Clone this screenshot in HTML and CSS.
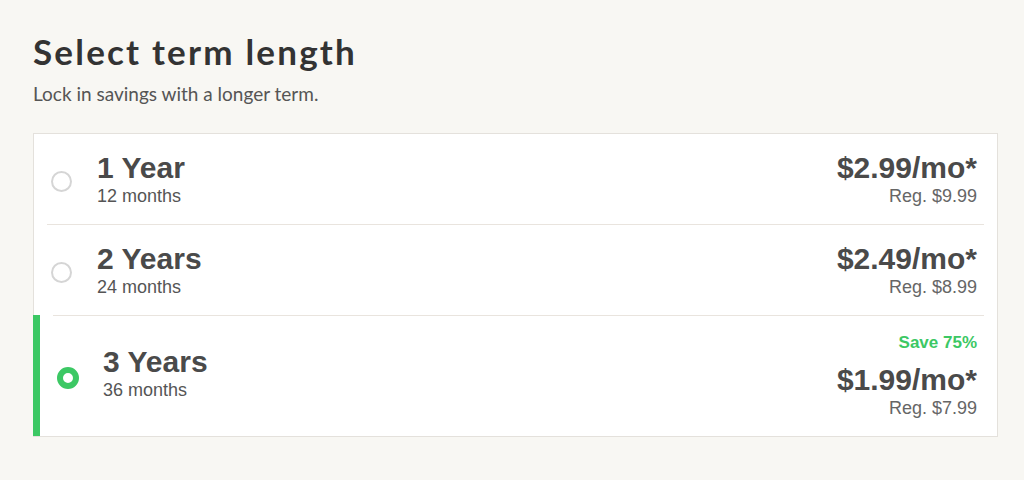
FILE: index.html
```html
<!DOCTYPE html>
<html lang="en">
<head>
<meta charset="utf-8">
<title>Select term length</title>
<link rel="stylesheet" href="styles.css">
</head>
<body>
<main class="page">
  <h1 class="heading">Select term length</h1>
  <p class="intro">Lock in savings with a longer term.</p>
  <ul class="terms">
    <li class="term">
      <div class="term-inner">
        <span class="radio"></span>
        <div class="term-label">
          <div class="term-name">1 Year</div>
          <div class="term-months">12 months</div>
        </div>
        <div class="term-price">
          <div class="price">$2.99/mo*</div>
          <div class="reg">Reg. $9.99</div>
        </div>
      </div>
    </li>
    <li class="term">
      <div class="term-inner divided">
        <span class="radio"></span>
        <div class="term-label">
          <div class="term-name">2 Years</div>
          <div class="term-months">24 months</div>
        </div>
        <div class="term-price">
          <div class="price">$2.49/mo*</div>
          <div class="reg">Reg. $8.99</div>
        </div>
      </div>
    </li>
    <li class="term selected">
      <div class="term-inner divided">
        <span class="radio"></span>
        <div class="term-label">
          <div class="term-name">3 Years</div>
          <div class="term-months">36 months</div>
        </div>
        <div class="term-price">
          <div class="save">Save 75%</div>
          <div class="price">$1.99/mo*</div>
          <div class="reg">Reg. $7.99</div>
        </div>
      </div>
    </li>
  </ul>
</main>
</body>
</html>
```
FILE: styles.css
```css
html, body {
  margin: 0;
  padding: 0;
  background: #f8f7f3;
}

.page {
  padding: 31px 26px 0 33px;
  font-family: "Liberation Sans", Arial, sans-serif;
  color: #4a4a4a;
}

.heading {
  margin: 0;
  font-family: Lato, "Liberation Sans", sans-serif;
  font-weight: 700;
  font-size: 35px;
  line-height: 40px;
  letter-spacing: 2.2px;
  color: #333333;
}

.intro {
  margin: 11px 0 27px;
  font-family: Lato, "Liberation Sans", sans-serif;
  font-size: 19px;
  line-height: 24px;
  color: #555555;
}

.terms {
  list-style: none;
  margin: 0;
  padding: 0;
  background: #ffffff;
  border: 1px solid #e4e1dc;
}

.term {
  display: flex;
}

.term.selected {
  margin-left: -1px;
  border-left: 7px solid #3cc864;
}

.term-inner {
  flex: 1;
  margin: 0 13px;
  padding: 17px 7px 17px 4px;
  display: flex;
  align-items: center;
}

.term-inner.divided {
  border-top: 1px solid #e9e4de;
}

.radio {
  flex: none;
  box-sizing: border-box;
  width: 21px;
  height: 21px;
  margin-top: 4px;
  border: 2px solid #d5d5d5;
  border-radius: 50%;
  background: #ffffff;
}

.selected .radio {
  width: 22px;
  height: 22px;
  border: 6px solid #3cc864;
}

.term-label {
  flex: 1;
  margin-left: 25px;
}

.selected .term-label {
  margin-left: 24px;
  margin-bottom: 7px;
}

.term-name {
  font-weight: 700;
  font-size: 30px;
  line-height: 34px;
}

.term-months {
  font-size: 18px;
  line-height: 22px;
  color: #555555;
}

.term-price {
  text-align: right;
}

.save {
  font-weight: 700;
  font-size: 17px;
  line-height: 20px;
  color: #3cc864;
  margin-bottom: 10px;
}

.price {
  font-weight: 700;
  font-size: 30px;
  line-height: 34px;
}

.reg {
  font-size: 18px;
  line-height: 22px;
  color: #666666;
}
```
